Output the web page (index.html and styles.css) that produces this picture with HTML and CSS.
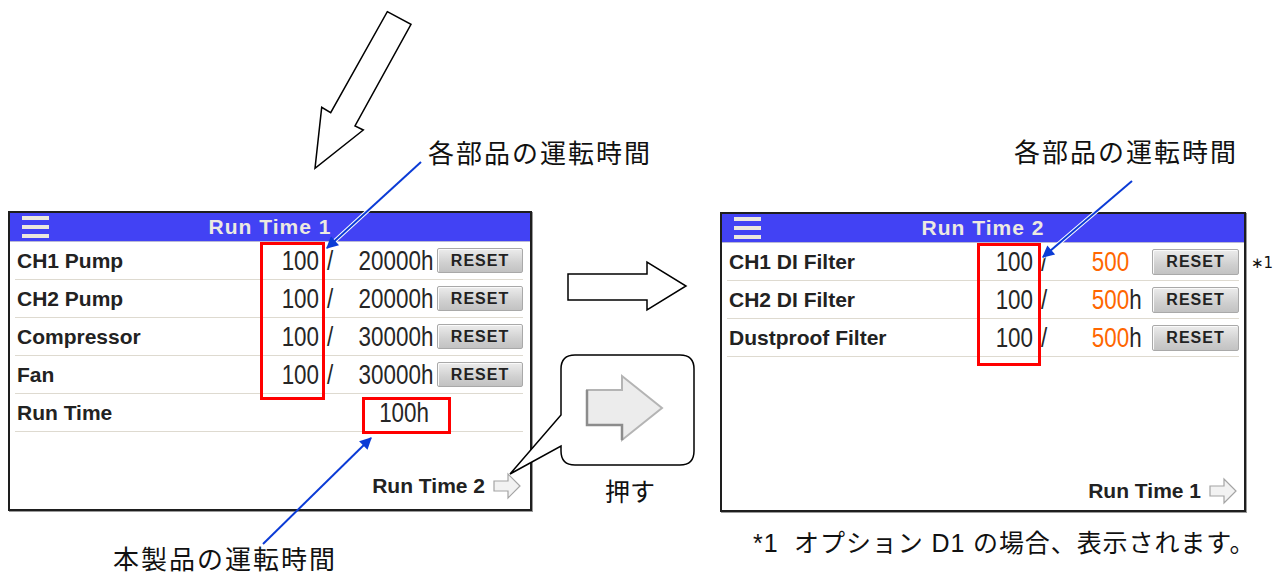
FILE: index.html
```html
<!DOCTYPE html>
<html lang="ja">
<head>
    <meta charset="UTF-8">
    <meta name="viewport" content="width=device-width, initial-scale=1.0">
    <title>Run Time</title>
    <link rel="stylesheet" href="styles.css">
</head>
<body>
<div class="figure">

    <!-- Screen 1 -->
    <section class="panel panel-left">
        <div class="panel-header">
            <div class="menu-icon"><span></span><span></span><span></span></div>
            <h2 class="panel-title">Run Time 1</h2>
        </div>
        <div class="row">
            <span class="label">CH1 Pump</span>
            <span class="num current">100</span>
            <span class="num slash">/</span>
            <span class="num total">20000h</span>
            <button class="reset">RESET</button>
        </div>
        <div class="row">
            <span class="label">CH2 Pump</span>
            <span class="num current">100</span>
            <span class="num slash">/</span>
            <span class="num total">20000h</span>
            <button class="reset">RESET</button>
        </div>
        <div class="row">
            <span class="label">Compressor</span>
            <span class="num current">100</span>
            <span class="num slash">/</span>
            <span class="num total">30000h</span>
            <button class="reset">RESET</button>
        </div>
        <div class="row">
            <span class="label">Fan</span>
            <span class="num current">100</span>
            <span class="num slash">/</span>
            <span class="num total">30000h</span>
            <button class="reset">RESET</button>
        </div>
        <div class="row">
            <span class="label">Run Time</span>
            <span class="num total total-only">100h</span>
        </div>
        <div class="panel-footer">
            <span>Run Time 2</span>
            <svg class="next-icon" viewBox="0 0 28 28" width="28" height="28">
                <polygon points="1,9 15,9 15,2 27,14 15,26 15,19 1,19" fill="#f2f2f2" stroke="#a4a4a4" stroke-width="1.2"/>
            </svg>
        </div>
    </section>

    <!-- Screen 2 -->
    <section class="panel panel-right">
        <div class="panel-header">
            <div class="menu-icon"><span></span><span></span><span></span></div>
            <h2 class="panel-title">Run Time 2</h2>
        </div>
        <div class="row">
            <span class="label">CH1 DI Filter</span>
            <span class="num current">100</span>
            <span class="num slash">/</span>
            <span class="num total"><span class="limit">500</span></span>
            <button class="reset">RESET</button>
        </div>
        <div class="row">
            <span class="label">CH2 DI Filter</span>
            <span class="num current">100</span>
            <span class="num slash">/</span>
            <span class="num total"><span class="limit">500</span>h</span>
            <button class="reset">RESET</button>
        </div>
        <div class="row">
            <span class="label">Dustproof Filter</span>
            <span class="num current">100</span>
            <span class="num slash">/</span>
            <span class="num total"><span class="limit">500</span>h</span>
            <button class="reset">RESET</button>
        </div>
        <div class="panel-footer">
            <span>Run Time 1</span>
            <svg class="next-icon" viewBox="0 0 28 28" width="28" height="28">
                <polygon points="1,9 15,9 15,2 27,14 15,26 15,19 1,19" fill="#f2f2f2" stroke="#a4a4a4" stroke-width="1.2"/>
            </svg>
        </div>
    </section>

    <!-- arrows, callout and marks drawn over the screens -->
    <svg class="canvas" viewBox="0 0 1276 574" width="1276" height="574">
        <defs>
            <marker id="head" viewBox="0 0 10 10" refX="9" refY="5" markerWidth="15" markerHeight="12" markerUnits="userSpaceOnUse" orient="auto">
                <path d="M0 0 L10 5 L0 10 z" fill="#0b3bd6"/>
            </marker>
        </defs>

        <polygon points="387.3,11.7 411,24.3 355,126 363.3,130 315,168.3 321.7,107.3 330.7,112.7" fill="#fff" stroke="#000" stroke-width="1.5" stroke-linejoin="miter"/>
        <polygon points="568,274 647,274 647,262 686,286 647,310 647,300 568,300" fill="#fff" stroke="#000" stroke-width="1.5"/>

        <path d="M575 355 H680 Q694 355 694 369 V451 Q694 465 680 465 H575 Q561 465 561 451 V446 L510 474 L561 415 V369 Q561 355 575 355 Z" fill="#fff" stroke="#000" stroke-width="1.5"/>
        <polygon points="587,390 622,390 622,376 662,408 622,440 622,425 587,425" fill="#ececec" stroke="#b4b4b4" stroke-width="2"/>
        <polyline points="587,390 587,425 622,425 622,440" fill="none" stroke="#8c8c8c" stroke-width="2.5"/>

        <rect x="261.5" y="243.5" width="62" height="155" fill="none" stroke="#ff0000" stroke-width="3"/>
        <rect x="363.5" y="398.5" width="86" height="34" fill="none" stroke="#ff0000" stroke-width="3"/>
        <rect x="978.5" y="244.5" width="61" height="120" fill="none" stroke="#ff0000" stroke-width="3"/>

        <line x1="421" y1="162" x2="327" y2="248" stroke="#fff" stroke-width="4"/>
        <line x1="421" y1="162" x2="327" y2="248" stroke="#0b3bd6" stroke-width="2" marker-end="url(#head)"/>
        <line x1="1132" y1="181" x2="1043" y2="257" stroke="#fff" stroke-width="4"/>
        <line x1="1132" y1="181" x2="1043" y2="257" stroke="#0b3bd6" stroke-width="2" marker-end="url(#head)"/>
        <line x1="263" y1="544" x2="371" y2="438" stroke="#0b3bd6" stroke-width="2" marker-end="url(#head)"/>
    </svg>

    <p class="note note-parts-left">各部品の運転時間</p>
    <p class="note note-parts-right">各部品の運転時間</p>
    <p class="note note-product">本製品の運転時間</p>
    <p class="note note-press">押す</p>
    <p class="note note-mark">∗1</p>
    <p class="note note-option">*1&nbsp; オプション D1 の場合、表示されます。</p>
</div>
</body>
</html>
```

FILE: styles.css
```css
* {
    box-sizing: border-box;
}

body {
    margin: 0;
    background: #fff;
    color: #222;
    font-family: 'Liberation Sans', Arial, sans-serif;
}

.figure {
    position: relative;
    width: 1276px;
    height: 574px;
    overflow: hidden;
}

.canvas {
    position: absolute;
    left: 0;
    top: 0;
    z-index: 2;
    pointer-events: none;
}

/* screens */
.panel {
    position: absolute;
    height: 300px;
    display: flex;
    flex-direction: column;
    background: #fff;
    border: 2px solid #1e1e1e;
    box-shadow: 1px 1px 0 #9a9a9a;
}

.panel-left {
    left: 8px;
    top: 211px;
    width: 524px;
}

.panel-right {
    left: 720px;
    top: 212px;
    width: 526px;
}

.panel-header {
    height: 29px;
    display: grid;
    grid-template-columns: 1fr auto 1fr;
    align-items: center;
    background: #4242f4;
    border-bottom: 1px solid #b9b9d6;
}

.menu-icon {
    width: 27px;
    height: 22px;
    margin-left: 12px;
    display: flex;
    flex-direction: column;
    justify-content: space-between;
}

.menu-icon span {
    height: 4px;
    background: #ebe7de;
}

.panel-title {
    margin: 0;
    font-size: 21px;
    font-weight: bold;
    letter-spacing: 1px;
    color: #ece9e1;
}

.row {
    height: 38px;
    margin: 0 7px 0 5px;
    padding-left: 2px;
    display: grid;
    grid-template-columns: 1fr 58px 22px 88px 94px;
    align-items: center;
    border-bottom: 1px solid #dedad0;
}

.panel-right .row {
    margin-right: 5px;
    grid-template-columns: 1fr 60px 22px 90px 94px;
}

.label {
    font-size: 21px;
    font-weight: bold;
}

/* the device uses a narrow face for figures */
.num {
    font-size: 28px;
    line-height: 1;
    color: #262626;
    transform: scaleX(0.8);
}

.current {
    text-align: right;
    transform-origin: right center;
}

.slash {
    text-align: center;
    transform-origin: center;
}

.total {
    text-align: right;
    transform-origin: right center;
}

.total-only {
    grid-column: 4;
}

.panel-right .total {
    text-align: left;
    padding-left: 46px;
    transform-origin: left center;
}

.limit {
    color: #ff6600;
}

.reset {
    justify-self: end;
    width: 86px;
    height: 25px;
    padding: 0;
    font-family: 'Liberation Sans', Arial, sans-serif;
    font-size: 16px;
    font-weight: bold;
    letter-spacing: 1px;
    color: #222;
    background: linear-gradient(#ececec, #d0d0d0 60%, #c2c2c2);
    border: 1px solid #a9a9a9;
    border-radius: 2px;
    box-shadow: inset 1px 1px 0 #fafafa;
}

.panel-right .reset {
    width: 87px;
    height: 26px;
}

.panel-footer {
    margin-top: auto;
    display: flex;
    justify-content: flex-end;
    align-items: center;
    gap: 8px;
    padding: 0 9px 9px 0;
    font-size: 21px;
    font-weight: bold;
}

.panel-right .panel-footer {
    padding: 0 7px 5px 0;
}

/* annotations */
.note {
    position: absolute;
    margin: 0;
    line-height: 1;
    color: #111;
    font-family: 'Liberation Sans', 'Noto Sans CJK JP', sans-serif;
    white-space: nowrap;
}

.note-parts-left,
.note-parts-right,
.note-product {
    font-size: 26px;
    letter-spacing: 2px;
}

.note-parts-left {
    left: 428px;
    top: 141px;
}

.note-parts-right {
    left: 1014px;
    top: 140px;
}

.note-product {
    left: 113px;
    top: 547px;
}

.note-press {
    left: 605px;
    top: 480px;
    font-size: 25px;
}

.note-mark {
    left: 1251px;
    top: 256px;
    font-family: 'DejaVu Sans', sans-serif;
    font-size: 15px;
}

.note-option {
    left: 753px;
    top: 531px;
    font-size: 25px;
    letter-spacing: 0.9px;
}
```
